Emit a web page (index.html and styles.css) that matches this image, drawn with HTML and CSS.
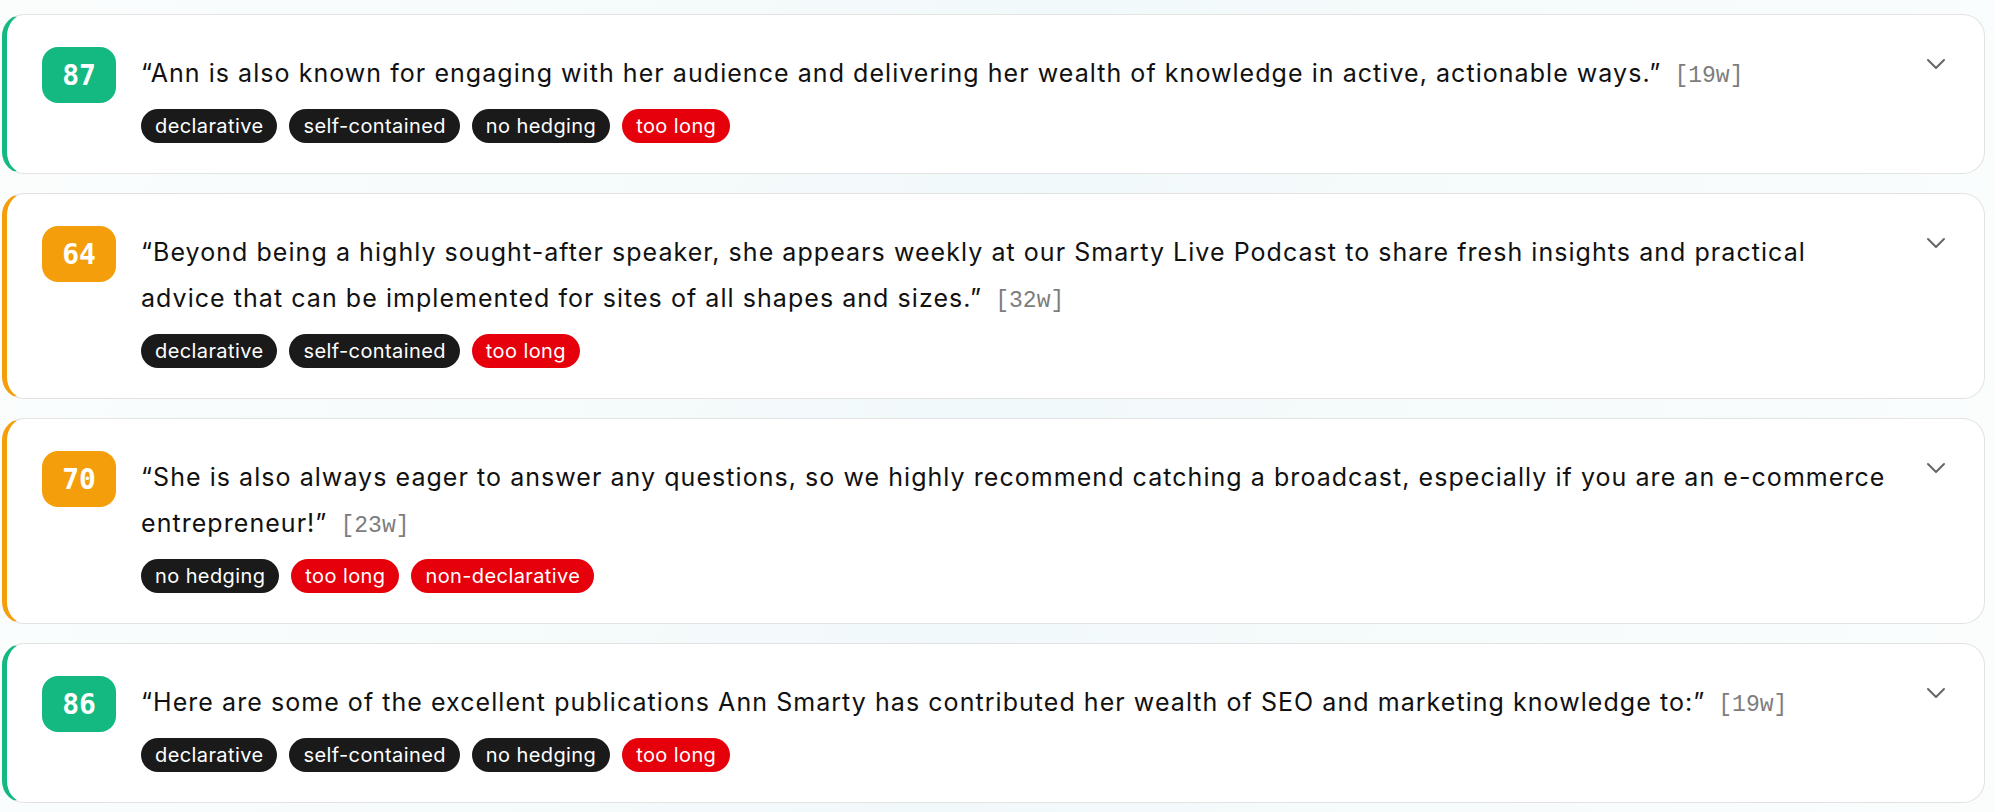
FILE: index.html
```html
<!DOCTYPE html>
<html lang="en">
<head>
<meta charset="utf-8">
<title>Claims</title>
<link rel="stylesheet" href="styles.css">
</head>
<body>
<div class="list">
  <div class="card good">
    <div class="score">87</div>
    <div class="body">
      <p class="claim">“Ann is also known for engaging with her audience and delivering her wealth of knowledge in active, actionable ways.” <span class="wc">[19w]</span></p>
      <div class="tags">
        <span class="tag">declarative</span>
        <span class="tag">self-contained</span>
        <span class="tag">no hedging</span>
        <span class="tag bad">too long</span>
      </div>
    </div>
    <svg class="chev" viewBox="0 0 20 12" width="20" height="12"><path d="M2 2 L10 10 L18 2" fill="none" stroke="#666" stroke-width="2" stroke-linecap="round" stroke-linejoin="round"/></svg>
  </div>
  <div class="card mid">
    <div class="score">64</div>
    <div class="body">
      <p class="claim">“Beyond being a highly sought-after speaker, she appears weekly at our Smarty Live Podcast to share fresh insights and practical advice that can be implemented for sites of all shapes and sizes.” <span class="wc">[32w]</span></p>
      <div class="tags">
        <span class="tag">declarative</span>
        <span class="tag">self-contained</span>
        <span class="tag bad">too long</span>
      </div>
    </div>
    <svg class="chev" viewBox="0 0 20 12" width="20" height="12"><path d="M2 2 L10 10 L18 2" fill="none" stroke="#666" stroke-width="2" stroke-linecap="round" stroke-linejoin="round"/></svg>
  </div>
  <div class="card mid">
    <div class="score">70</div>
    <div class="body">
      <p class="claim">“She is also always eager to answer any questions, so we highly recommend catching a broadcast, especially if you are an <span class="nowrap">e-commerce</span> entrepreneur!” <span class="wc">[23w]</span></p>
      <div class="tags">
        <span class="tag">no hedging</span>
        <span class="tag bad">too long</span>
        <span class="tag bad">non-declarative</span>
      </div>
    </div>
    <svg class="chev" viewBox="0 0 20 12" width="20" height="12"><path d="M2 2 L10 10 L18 2" fill="none" stroke="#666" stroke-width="2" stroke-linecap="round" stroke-linejoin="round"/></svg>
  </div>
  <div class="card good">
    <div class="score">86</div>
    <div class="body">
      <p class="claim">“Here are some of the excellent publications Ann Smarty has contributed her wealth of SEO and marketing knowledge to:” <span class="wc">[19w]</span></p>
      <div class="tags">
        <span class="tag">declarative</span>
        <span class="tag">self-contained</span>
        <span class="tag">no hedging</span>
        <span class="tag bad">too long</span>
      </div>
    </div>
    <svg class="chev" viewBox="0 0 20 12" width="20" height="12"><path d="M2 2 L10 10 L18 2" fill="none" stroke="#666" stroke-width="2" stroke-linecap="round" stroke-linejoin="round"/></svg>
  </div>
</div>
</body>
</html>
```
FILE: styles.css
```css
html, body {
  margin: 0;
  padding: 0;
}
body {
  background: linear-gradient(100deg, #fbfdfd 0%, #f2f9fa 50%, #fbfdfd 100%);
  font-family: "Inter", "Liberation Sans", sans-serif;
  color: #111;
  min-height: 812px;
}
.list {
  display: flex;
  flex-direction: column;
  gap: 19px;
  padding: 14px 9px 0 2px;
}
.card {
  display: flex;
  align-items: flex-start;
  background: #fff;
  border: 1.5px solid #e2e2e2;
  border-left: 5px solid #14b981;
  border-radius: 22px;
  padding: 32px 38px 30px 35px;
}
.card.good { border-left-color: #14b981; }
.card.mid { border-left-color: #f59e0b; }
.score {
  flex: none;
  width: 74px;
  height: 56px;
  border-radius: 16px;
  display: flex;
  align-items: center;
  justify-content: center;
  color: #fff;
  font-family: "DejaVu Sans Mono", "Liberation Mono", monospace;
  font-weight: 700;
  font-size: 28px;
}
.good .score { background: #14b981; }
.mid .score { background: #f59e0b; }
.body {
  flex: 1;
  margin-top: 3px;
  margin-left: 25px;
  margin-right: 28px;
  min-width: 0;
}
.claim {
  margin: 0;
  font-size: 25px;
  letter-spacing: 1.05px;
  line-height: 46px;
}
.nowrap {
  white-space: nowrap;
}
.wc {
  font-family: "Liberation Mono", monospace;
  font-size: 23px;
  line-height: 20px;
  letter-spacing: 0;
  color: #7d7d7d;
  margin-left: 5px;
}
.tags {
  display: flex;
  gap: 12px;
  margin-top: 13px;
}
.tag {
  display: inline-flex;
  align-items: center;
  height: 34px;
  padding: 0 14px;
  border-radius: 17px;
  background: #1a1a1a;
  color: #fff;
  font-size: 20px;
  letter-spacing: 0.4px;
}
.tag.bad { background: #e5000b; }
.chev {
  flex: none;
  margin-top: 11px;
}
```
